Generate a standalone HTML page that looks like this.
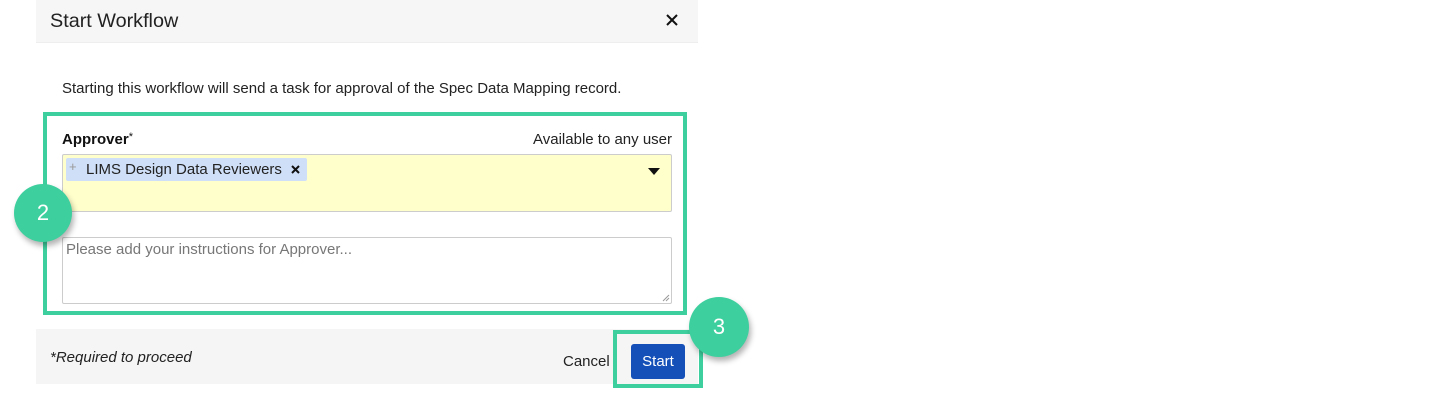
<!DOCTYPE html>
<html><head><meta charset="utf-8"><style>
*{box-sizing:border-box;margin:0;padding:0}
body{width:1436px;height:400px;background:#fff;font-family:"Liberation Sans",Arial,sans-serif;color:#222;position:relative;overflow:hidden}
.abs{position:absolute}
</style></head><body>
<div class="abs" style="left:36px;top:0;width:662px;height:43px;background:#f6f6f6;border-bottom:1px solid #eee"></div>
<div class="abs" style="left:50px;top:10px;font-size:19.8px;color:#222">Start Workflow</div>
<svg class="abs" style="left:666px;top:14px" width="12" height="12"><path d="M1 1L11 11M11 1L1 11" stroke="#111" stroke-width="2"/></svg>
<div class="abs" style="left:62px;top:80px;font-size:15px;color:#222">Starting this workflow will send a task for approval of the Spec Data Mapping record.</div>
<div class="abs" style="left:43px;top:112px;width:644px;height:203px;border:4px solid #3ecf9e"></div>
<div class="abs" style="left:62px;top:131px;font-size:15px;font-weight:bold;color:#111">Approver<span style="font-weight:normal;font-size:11px;vertical-align:top">*</span></div>
<div class="abs" style="left:470px;top:131px;width:202px;text-align:right;font-size:15px;color:#222">Available to any user</div>
<div class="abs" style="left:62px;top:154px;width:610px;height:58px;background:#ffffcc;border:1px solid #ccc;border-radius:2px"></div>
<div class="abs" style="left:66px;top:158px;width:241px;height:23px;background:#cfdff7;border-radius:2px"></div>
<div class="abs" style="left:69px;top:159px;font-size:13px;color:#999">+</div>
<div class="abs" style="left:86px;top:161px;font-size:15px;color:#222">LIMS Design Data Reviewers</div>
<svg class="abs" style="left:291px;top:165px" width="9" height="9"><path d="M1 1L8 8M8 1L1 8" stroke="#111" stroke-width="2"/></svg>
<svg class="abs" style="left:648px;top:168px" width="12" height="7"><path d="M0 0H12L6 7Z" fill="#111"/></svg>
<div class="abs" style="left:62px;top:237px;width:610px;height:67px;border:1px solid #ccc;border-radius:2px;background:#fff"></div>
<div class="abs" style="left:66px;top:241px;font-size:15px;color:#777">Please add your instructions for Approver...</div>
<svg class="abs" style="left:662px;top:294px" width="8" height="8"><path d="M7 1L1 7M7 4L4 7" stroke="#999" stroke-width="1"/></svg>
<div class="abs" style="left:14px;top:184px;width:58px;height:58px;border-radius:50%;background:#3ecf9e;box-shadow:2px 4px 6px rgba(0,0,0,.3);color:#fff;font-size:22px;text-align:center;line-height:58px">2</div>
<div class="abs" style="left:36px;top:329px;width:662px;height:55px;background:#f5f5f5"></div>
<div class="abs" style="left:50px;top:349px;font-size:15px;font-style:italic;color:#222">*Required to proceed</div>
<div class="abs" style="left:563px;top:353px;font-size:15px;color:#222">Cancel</div>
<div class="abs" style="left:613px;top:330px;width:90px;height:58px;border:4px solid #3ecf9e"></div>
<div class="abs" style="left:631px;top:344px;width:54px;height:35px;background:#1450b8;border-radius:3px;color:#fff;font-size:15px;text-align:center;line-height:35px">Start</div>
<div class="abs" style="left:689px;top:297px;width:60px;height:60px;border-radius:50%;background:#3ecf9e;box-shadow:2px 4px 6px rgba(0,0,0,.3);color:#fff;font-size:22px;text-align:center;line-height:60px">3</div>
</body></html>
